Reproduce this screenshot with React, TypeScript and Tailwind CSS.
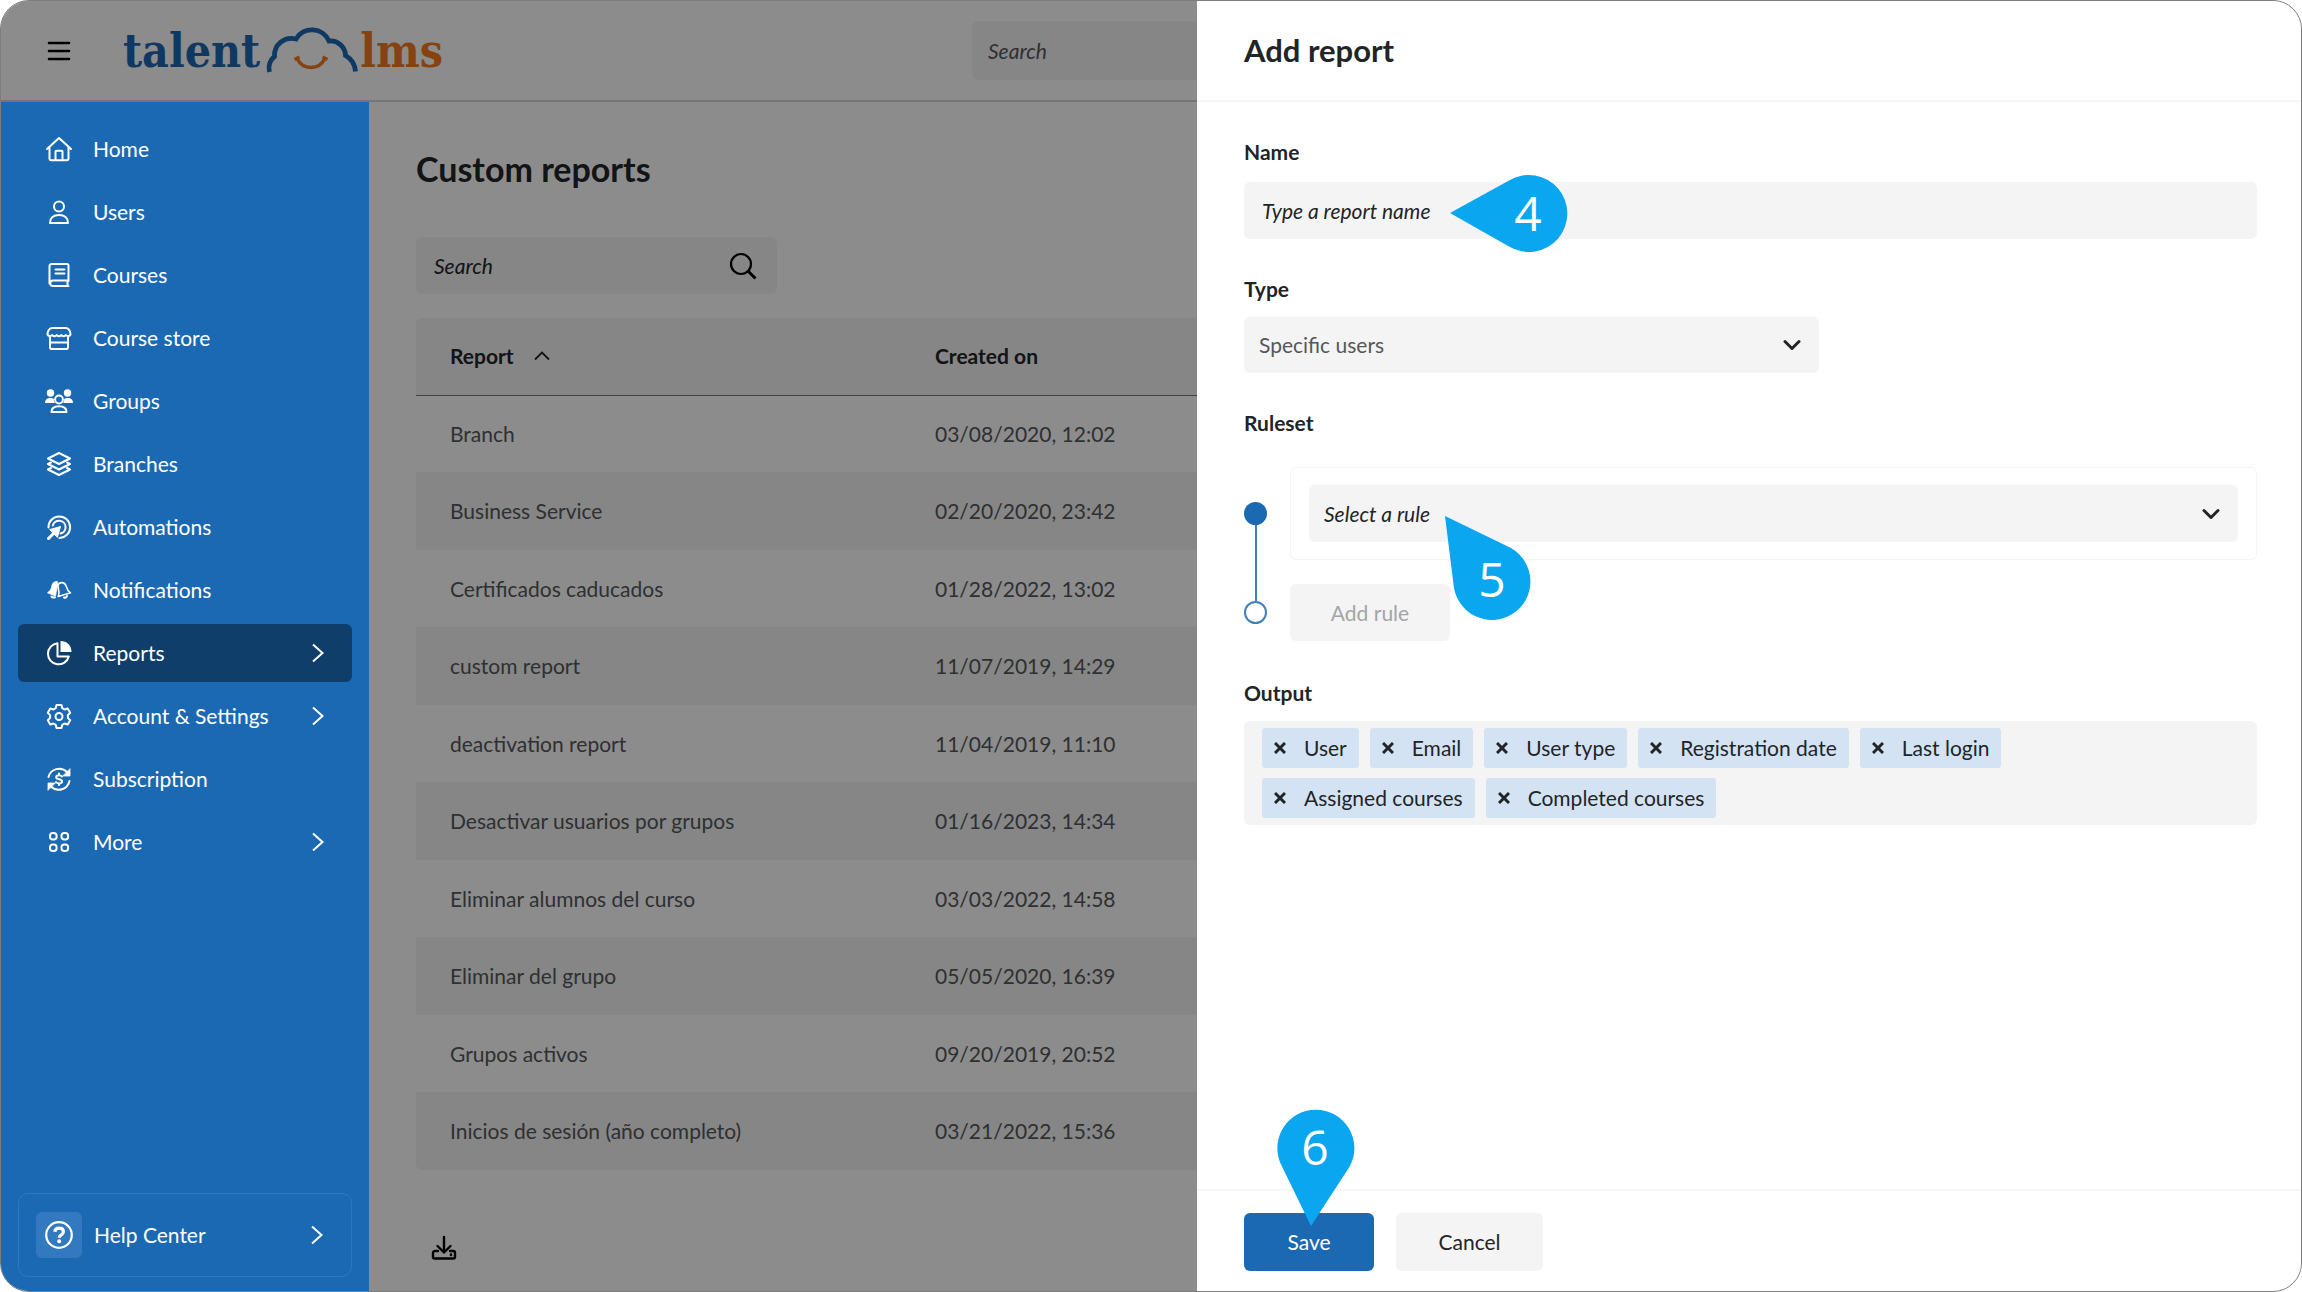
import type { ReactNode } from "react";

type NavItem = {
  label: string;
  icon: ReactNode;
  active?: boolean;
  expandable?: boolean;
};

const reports = [
  { name: "Branch", createdOn: "03/08/2020, 12:02" },
  { name: "Business Service", createdOn: "02/20/2020, 23:42" },
  { name: "Certificados caducados", createdOn: "01/28/2022, 13:02" },
  { name: "custom report", createdOn: "11/07/2019, 14:29" },
  { name: "deactivation report", createdOn: "11/04/2019, 11:10" },
  { name: "Desactivar usuarios por grupos", createdOn: "01/16/2023, 14:34" },
  { name: "Eliminar alumnos del curso", createdOn: "03/03/2022, 14:58" },
  { name: "Eliminar del grupo", createdOn: "05/05/2020, 16:39" },
  { name: "Grupos activos", createdOn: "09/20/2019, 20:52" },
  { name: "Inicios de sesión (año completo)", createdOn: "03/21/2022, 15:36" },
];

const outputs = [
  "User",
  "Email",
  "User type",
  "Registration date",
  "Last login",
  "Assigned courses",
  "Completed courses",
];

function Icon({ children }: { children: ReactNode }) {
  return (
    <svg
      viewBox="0 0 28 28"
      className="size-7 shrink-0"
      fill="none"
      stroke="currentColor"
      strokeWidth="2"
      strokeLinecap="round"
      strokeLinejoin="round"
      aria-hidden="true"
    >
      {children}
    </svg>
  );
}

const navItems: NavItem[] = [
  {
    label: "Home",
    icon: (
      <Icon>
        <path d="M2 14 14 3l12 11M4.500 12v11.500a1.800 1.800 0 0 0 1.800 1.800h15.400a1.800 1.800 0 0 0 1.800-1.800V12" />
        <path d="M10.500 25v-8.200a1 1 0 0 1 1-1h5a1 1 0 0 1 1 1V25" />
      </Icon>
    ),
  },
  {
    label: "Users",
    icon: (
      <Icon>
        <circle cx="14" cy="8.500" r="5" />
        <path d="M5 25c0-5 3.500-8 9-8s9 3 9 8z" />
      </Icon>
    ),
  },
  {
    label: "Courses",
    icon: (
      <Icon>
        <path d="M23.500 20V4.500A1.500 1.500 0 0 0 22 3H6.500A2 2 0 0 0 4.500 5v17.500M23.500 19.500h-16a2.800 2.800 0 0 0 0 5.500h16M22.500 20v5" />
        <path d="M10.500 8.500h9M10.500 12.500h9" />
      </Icon>
    ),
  },
  {
    label: "Course store",
    icon: (
      <Icon>
        <path d="M7 4h14c3 0 4.500 4 4.500 6.500a2.700 2.700 0 0 1-4.600.5 2.700 2.700 0 0 1-4.600 0 2.700 2.700 0 0 1-4.600 0 2.700 2.700 0 0 1-4.600 0 2.700 2.700 0 0 1-4.600-.5C2.500 8 4 4 7 4z" />
        <path d="M5 13.500v9.700A1.800 1.800 0 0 0 6.800 25h14.400a1.800 1.800 0 0 0 1.800-1.800v-9.700M5 18.500h18" />
      </Icon>
    ),
  },
  {
    label: "Groups",
    icon: (
      <Icon>
        <g fill="currentColor" stroke="none">
          <circle cx="5.500" cy="6" r="3.700" />
          <circle cx="22.500" cy="6" r="3.700" />
          <path d="M0 16c0-3.400 2-5 5-5 1.600 0 2.800.3 3.800 1 0 1.600.3 2.800 1 4zM28 16c0-3.400-2-5-5-5-1.600 0-2.800.3-3.800 1 0 1.600-.3 2.800-1 4z" />
        </g>
        <circle cx="14" cy="12.500" r="3.900" />
        <path d="M6.500 25c0-3.800 3-5.700 7.500-5.700s7.500 1.900 7.500 5.700z" />
      </Icon>
    ),
  },
  {
    label: "Branches",
    icon: (
      <Icon>
        <path d="M14 3 25 8.500 14 14 3 8.500z" />
        <path d="M6 12.500 3 14l11 5.500L25 14l-3-1.500M6 18l-3 1.500L14 25l11-5.500-3-1.500" />
      </Icon>
    ),
  },
  {
    label: "Automations",
    icon: (
      <Icon>
        <path d="M3.500 14.500A10.800 10.800 0 1 1 14.500 25M7.800 12.500a6.500 6.500 0 1 1 7.700 8" />
        <path d="M3.500 25.500 9 20" strokeWidth="3" />
        <path d="M5 16.500 15.500 13.500 12.500 24z" fill="currentColor" strokeWidth="1" />
      </Icon>
    ),
  },
  {
    label: "Notifications",
    icon: (
      <Icon>
        <path d="M12 5.500c-3.300 0-4.800 2-5.200 4.700-.4 3-1.900 4.800-4.300 6.600l8 3.200 2.200-12z" fill="currentColor" strokeWidth="0.800" />
        <path d="M14 7.500c3-1.800 6.200-.7 7.100 2.500.8 3 1.800 5 4.400 6.800L13.300 20.500c1.300-3 .8-5.200.1-7.900-.6-2.200-.5-4 .6-5.100z" strokeWidth="1.600" />
        <path d="M6.500 20.500c1 1.200 2.500 1.200 3.500.8M19 21.500c1.200.5 2.500 0 3-1.500" />
      </Icon>
    ),
  },
  {
    label: "Reports",
    active: true,
    expandable: true,
    icon: (
      <Icon>
        <path d="M12.500 4.200a10.600 10.600 0 1 0 11.300 13.300h-11.300z" />
        <path d="M15.500 2v11h11C26.500 6.500 22 2 15.500 2z" fill="currentColor" stroke="none" />
      </Icon>
    ),
  },
  {
    label: "Account & Settings",
    expandable: true,
    icon: (
      <Icon>
        <path d="M11.500 3h5l.8 3.200 2.200 1.300 3.200-1 2.500 4.300-2.300 2.300v2.800l2.300 2.300-2.500 4.300-3.200-1-2.200 1.300-.8 3.200h-5l-.8-3.200-2.200-1.300-3.200 1-2.500-4.300 2.300-2.300v-2.800L2.800 10.800l2.500-4.300 3.200 1 2.200-1.300z" />
        <circle cx="14" cy="14.500" r="3.500" />
      </Icon>
    ),
  },
  {
    label: "Subscription",
    icon: (
      <Icon>
        <path d="M3.500 12A11 11 0 0 1 22 7M24.500 16A11 11 0 0 1 6 21.500" />
        <path d="M25 4v7h-7zM3 25v-7h7z" fill="currentColor" strokeWidth="0.800" />
        <path d="M17 11.500c-.8-1-1.800-1.300-3-1.300-1.600 0-2.800.7-2.800 2 0 3 5.800 1.200 5.800 4.200 0 1.300-1.200 2-2.900 2-1.300 0-2.400-.4-3.100-1.400M14 8.500v1.500M14 18.500V20" />
      </Icon>
    ),
  },
  {
    label: "More",
    expandable: true,
    icon: (
      <Icon>
        <rect x="5" y="5" width="6.600" height="6.600" rx="2.800" />
        <rect x="16.500" y="5" width="6.600" height="6.600" rx="2.800" />
        <rect x="5" y="16.500" width="6.600" height="6.600" rx="2.800" />
        <rect x="16.500" y="16.500" width="6.600" height="6.600" rx="2.800" />
      </Icon>
    ),
  },
];

function ChevronRight() {
  return (
    <svg viewBox="0 0 12 20" className="h-5 w-3 shrink-0" fill="none" stroke="currentColor" strokeWidth="2" aria-hidden="true">
      <path d="m1 1.500 9.500 8.500L1 18.500" />
    </svg>
  );
}

function ChevronDown() {
  return (
    <svg
      viewBox="0 0 18 12"
      className="pointer-events-none absolute right-[18px] top-1/2 h-3 w-[18px] -translate-y-1/2"
      fill="none"
      stroke="#222527"
      strokeWidth="3"
      strokeLinecap="round"
      strokeLinejoin="round"
      aria-hidden="true"
    >
      <path d="m2 2.500 7 7 7-7" />
    </svg>
  );
}

function Logo() {
  return (
    <a href="#home" aria-label="talentlms" className="flex items-end font-['DejaVu_Serif_Condensed','DejaVu_Serif',serif] text-[46px] font-bold leading-[50px]">
      <span className="text-[#1c69b3]">talent</span>
      <svg viewBox="0 0 96 50" className="ml-1 h-[50px] w-24" fill="none" aria-hidden="true">
        <path
          d="M5.500 46C4 40 6 34 10.500 30.500A17 17 0 0 1 32 13A18.500 18.500 0 0 1 65 15A15 15 0 0 1 81.500 29.500A20 20 0 0 1 91.500 45.500"
          stroke="#1c69b3"
          strokeWidth="4.800"
        />
        <path d="M33 32.500c6 12 22 12 28 0M30.500 33.500l5-2.500M58.500 31l5 2.500" stroke="#f47a1c" strokeWidth="3.400" />
      </svg>
      <span className="text-[#f47a1c]">lms</span>
    </a>
  );
}

function Pin({ number, className, shape, digit }: { number: number; className: string; shape: string; digit: string }) {
  return (
    <div className={`pointer-events-none absolute z-10 ${className}`}>
      <svg viewBox="0 0 120 120" className="absolute inset-0 size-[120px] overflow-visible" fill="#0aa6ef" aria-hidden="true">
        <path d={shape} />
      </svg>
      <span className={`absolute flex size-[76px] items-center justify-center font-['Open_Sans',sans-serif] text-[48px] leading-none text-white ${digit}`}>
        {number}
      </span>
    </div>
  );
}

function Sidebar() {
  return (
    <aside className="relative z-10 flex w-[368px] shrink-0 flex-col justify-between bg-[#1c69b3] px-[17px] pb-3.5 pt-[18px] text-white">
      <nav>
        <ul className="flex flex-col gap-[5px]">
          {navItems.map((item) => (
            <li key={item.label}>
              <a
                href={`#${item.label.toLowerCase().replace(/\W+/g, "-")}`}
                className={`flex h-[58px] items-center gap-5 rounded-md pl-[27px] pr-7 ${item.active ? "bg-[#103e6a]" : ""}`}
              >
                {item.icon}
                <span className="flex-1">{item.label}</span>
                {item.expandable ? <ChevronRight /> : null}
              </a>
            </li>
          ))}
        </ul>
      </nav>
      <a href="#help" className="flex h-[84px] items-center gap-3 rounded-[10px] border border-[#2f78c0] pl-[17px] pr-7">
        <span className="flex size-[46px] items-center justify-center rounded-md bg-[#3379bf]">
          <svg viewBox="0 0 30 30" className="size-[30px]" fill="none" stroke="currentColor" strokeWidth="2.200" aria-hidden="true">
            <circle cx="15" cy="15" r="12.800" />
            <path d="M10.800 11.800c.3-2.500 2-3.700 4.300-3.700 2.500 0 4.300 1.400 4.300 3.600 0 3.200-4.200 3.200-4.200 6" strokeWidth="3.200" />
            <circle cx="15.200" cy="21.300" r="2" fill="currentColor" stroke="none" />
          </svg>
        </span>
        <span className="flex-1">Help Center</span>
        <ChevronRight />
      </a>
    </aside>
  );
}

function ReportsPage() {
  return (
    <main className="min-w-0 flex-1 px-[47px] pb-6 pt-[47px]">
      <h1 className="text-[34px] font-bold leading-10">Custom reports</h1>
      <div className="mt-12 flex h-[57px] w-[361px] items-center rounded-md bg-[#f4f4f4] pl-[18px] pr-5">
        <input
          type="search"
          aria-label="Search reports"
          placeholder="Search"
          className="min-w-0 flex-1 bg-transparent italic outline-none placeholder:text-[#222527]"
        />
        <svg viewBox="0 0 28 28" className="size-7" fill="none" stroke="#000" strokeWidth="2.200" aria-hidden="true">
          <circle cx="12" cy="12" r="10" />
          <path d="m19 19 7.500 7.500" strokeWidth="3" />
        </svg>
      </div>
      <table className="mt-6 w-full table-fixed border-collapse overflow-hidden rounded-md text-left">
        <colgroup>
          <col className="w-[485px]" />
          <col />
        </colgroup>
        <thead>
          <tr className="h-[77px] border-b border-[#7a7a7a] bg-[#f4f4f4]">
            <th className="pl-[34px] font-bold" aria-sort="ascending">
              <button type="button" className="flex items-center gap-5 font-bold">
                Report
                <svg viewBox="0 0 16 10" className="h-2.5 w-4" fill="none" stroke="currentColor" strokeWidth="1.800" aria-hidden="true">
                  <path d="m1 8.500 7-7 7 7" />
                </svg>
              </button>
            </th>
            <th className="pl-[34px] font-bold">Created on</th>
          </tr>
        </thead>
        <tbody className="text-[#55585b]">
          {reports.map((report) => (
            <tr key={report.name} className="odd:h-[77px] even:h-[78px] even:bg-[#f4f4f4]">
              <td className="pl-[34px]">{report.name}</td>
              <td className="pl-[34px]">{report.createdOn}</td>
            </tr>
          ))}
        </tbody>
      </table>
      <button type="button" aria-label="Export" className="ml-3.5 mt-16 block">
        <svg viewBox="0 0 28 28" className="size-7" fill="none" stroke="#000" strokeWidth="2.400" strokeLinecap="round" strokeLinejoin="round" aria-hidden="true">
          <path d="M14 3v15M7.500 12l6.500 6.500L20.500 12" />
          <path d="M8 17H5a2 2 0 0 0-2 2v4a1.500 1.500 0 0 0 1.500 1.500h19A1.500 1.500 0 0 0 25 23v-4a2 2 0 0 0-2-2h-3M21 20.500v.5" />
        </svg>
      </button>
    </main>
  );
}

function AddReportDrawer() {
  return (
    <section role="dialog" aria-labelledby="drawer-title" className="absolute inset-y-0 right-0 z-20 flex w-[48%] flex-col bg-white">
      <header className="flex h-[101px] shrink-0 items-center border-b-2 border-[#f6f6f6] px-[47px] pb-0.5">
        <h2 id="drawer-title" className="text-[31px] font-bold leading-9">Add report</h2>
      </header>

      <form className="flex flex-1 flex-col">
        <div className="flex-1 pl-[47px] pr-11 pt-9">
          <label htmlFor="report-name" className="block font-bold">Name</label>
          <div className="relative mt-4">
            <input
              id="report-name"
              type="text"
              placeholder="Type a report name"
              className="h-[57px] w-full rounded-md bg-[#f4f4f4] px-[18px] italic outline-none placeholder:text-[#222527]"
            />
            <Pin
              number={4}
              className="left-[206px] top-[-7px] size-[120px]"
              shape="M0 38 59 5.500A38.500 38.500 0 1 1 59 71.500z"
              digit="left-10 top-0"
            />
          </div>

          <label htmlFor="report-type" className="mt-9 block font-bold">Type</label>
          <div className="relative mt-3.5 w-[575px]">
            <select id="report-type" className="h-14 w-full appearance-none rounded-md bg-[#f4f4f4] px-[15px] text-[#55585b] outline-none">
              <option>Specific users</option>
            </select>
            <ChevronDown />
          </div>

          <h3 className="mt-9 font-bold">Ruleset</h3>
          <div className="mt-[30px] flex gap-[23px]">
            <div className="flex w-[23px] flex-col items-center pb-[17px] pt-[35px]">
              <span className="size-[23px] rounded-full bg-[#1c69b3]" />
              <span className="w-0.5 flex-1 bg-[#3f7fbd]" />
              <span className="size-[23px] rounded-full border-2 border-[#3f7fbd]" />
            </div>
            <div className="min-w-0 flex-1">
              <div className="relative rounded-md border border-[#f4f4f4] px-[18px] py-[17px]">
                <div className="relative">
                  <select aria-label="Select a rule" className="h-[57px] w-full appearance-none rounded-md bg-[#f4f4f4] px-[15px] italic outline-none">
                    <option>Select a rule</option>
                  </select>
                  <ChevronDown />
                </div>
                <Pin
                  number={5}
                  className="left-[154px] top-[48px] size-[120px]"
                  shape="M0 0 66 32A38.500 38.500 0 1 1 8.600 69z"
                  digit="left-[9px] top-[25px]"
                />
              </div>
              <button type="button" disabled className="mt-6 h-[57px] w-40 rounded-md bg-[#f4f4f4] text-[#a3a5a6]">
                Add rule
              </button>
            </div>
          </div>

          <h3 className="mt-[38px] font-bold">Output</h3>
          <ul className="mt-3.5 flex flex-wrap gap-x-[11px] gap-y-2.5 rounded-md bg-[#f4f4f4] py-[7px] pl-[18px] pr-12">
            {outputs.map((output) => (
              <li key={output} className="flex h-10 items-center gap-[18px] rounded-[3px] bg-[#d4e3f3] px-3">
                <button type="button" aria-label={`Remove ${output}`}>
                  <svg viewBox="0 0 12 12" className="size-3" stroke="#222527" strokeWidth="3" aria-hidden="true">
                    <path d="m1 1 10 10M11 1 1 11" />
                  </svg>
                </button>
                {output}
              </li>
            ))}
          </ul>
        </div>

        <footer className="flex gap-[22px] border-t-2 border-[#f6f6f6] px-[47px] pb-5 pt-[22px]">
          <div className="relative">
            <button type="submit" className="h-[58px] w-[130px] rounded-md bg-[#1c69b3] text-white">
              Save
            </button>
            <Pin
              number={6}
              className="left-[33px] top-[-104px] size-[120px]"
              shape="M34 117 5 57.500A38.500 38.500 0 1 1 73 57z"
              digit="left-0 top-0"
            />
          </div>
          <button type="button" className="h-[58px] w-[147px] rounded-md bg-[#f4f4f4]">
            Cancel
          </button>
        </footer>
      </form>
    </section>
  );
}

export default function App() {
  return (
    <div className="relative flex min-h-screen flex-col overflow-hidden rounded-[29px] border border-[#7d7d7d] bg-white font-['Lato',sans-serif] text-[21px] leading-7 text-[#222527]">
      <header className="flex h-[101px] shrink-0 items-center border-b-2 border-[#d6d6d6] pl-[46px]">
        <button type="button" aria-label="Menu">
          <svg viewBox="0 0 24 20" className="h-5 w-6" stroke="#000" strokeWidth="2.600" strokeLinecap="round" aria-hidden="true">
            <path d="M2 2h20M2 10h20M2 18h20" />
          </svg>
        </button>
        <div className="ml-[52px] w-[849px]">
          <Logo />
        </div>
        <input
          type="search"
          aria-label="Search"
          placeholder="Search"
          className="h-[59px] w-[600px] rounded-md bg-[#f4f4f4] px-4 italic outline-none placeholder:text-[#55585b]"
        />
      </header>
      <div className="flex flex-1">
        <Sidebar />
        <ReportsPage />
      </div>
      <div className="absolute inset-0 bg-black/45" />
      <AddReportDrawer />
    </div>
  );
}
